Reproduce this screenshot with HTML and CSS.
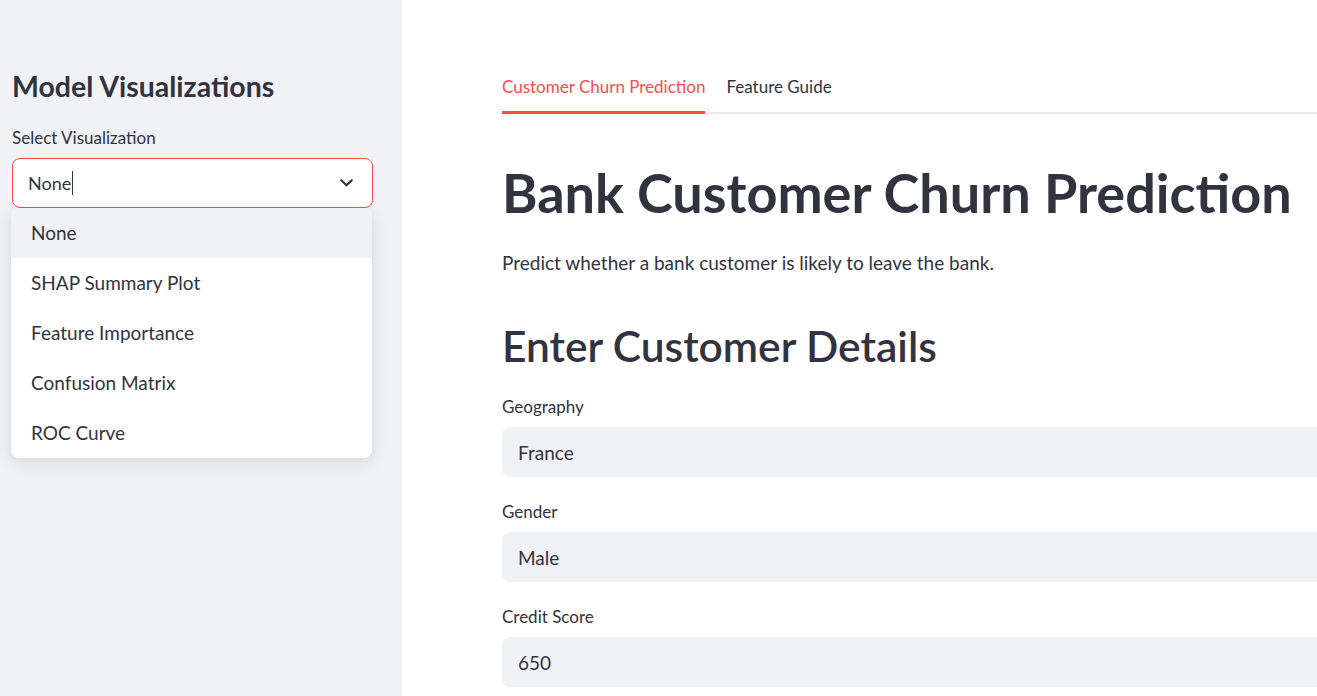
FILE: index.html
```html
<!DOCTYPE html>
<html lang="en">
<head>
<meta charset="utf-8">
<title>Bank Customer Churn Prediction</title>
<link rel="stylesheet" href="styles.css">
</head>
<body>
<div class="app">
  <aside class="sidebar">
    <h2 class="side-title">Model Visualizations</h2>
    <label class="label side-label">Select Visualization</label>
    <div class="select-wrap">
      <div class="select open">
        <span class="select-value">None<span class="caret"></span></span>
        <svg class="chevron" width="13" height="8" viewBox="0 0 13 8"><path d="M1.3 1.3 L6.5 6.3 L11.7 1.3" fill="none" stroke="#31333f" stroke-width="2.2" stroke-linecap="round" stroke-linejoin="round"/></svg>
      </div>
      <ul class="menu">
        <li class="menu-item active">None</li>
        <li class="menu-item">SHAP Summary Plot</li>
        <li class="menu-item">Feature Importance</li>
        <li class="menu-item">Confusion Matrix</li>
        <li class="menu-item">ROC Curve</li>
      </ul>
    </div>
  </aside>
  <main class="main">
    <div class="tabs">
      <div class="tab active">Customer Churn Prediction</div>
      <div class="tab">Feature Guide</div>
    </div>
    <h1 class="title">Bank Customer Churn Prediction</h1>
    <p class="lead">Predict whether a bank customer is likely to leave the bank.</p>
    <h2 class="section">Enter Customer Details</h2>
    <div class="field">
      <div class="label">Geography</div>
      <div class="input">France</div>
    </div>
    <div class="field">
      <div class="label">Gender</div>
      <div class="input">Male</div>
    </div>
    <div class="field">
      <div class="label">Credit Score</div>
      <div class="input">650</div>
    </div>
  </main>
</div>
</body>
</html>
```
FILE: styles.css
```css
* { box-sizing: border-box; }
html, body {
  margin: 0;
  padding: 0;
  height: 100%;
  overflow: hidden;
}
body {
  font-family: Lato, "Noto Sans", sans-serif;
  color: #31333f;
  background: #ffffff;
}
.app {
  display: flex;
  height: 696px;
}
.sidebar {
  width: 402px;
  flex: none;
  background: #f0f2f6;
  padding: 66px 29px 0 12px;
}
.side-title {
  margin: 0;
  font-size: 28.5px;
  font-weight: 700;
  line-height: 40px;
}
.label {
  display: block;
  font-size: 17px;
  line-height: 24px;
  margin: 0;
}
.side-label {
  margin-top: 20px;
}
.select-wrap {
  position: relative;
  margin-top: 8px;
}
.select {
  height: 50px;
  width: 361px;
  background: #ffffff;
  border: 1px solid #ff4b4b;
  border-radius: 8px;
  display: flex;
  align-items: center;
  justify-content: space-between;
  padding: 0 19px 0 15px;
  font-size: 18px;
}
.select-value {
  display: flex;
  align-items: center;
}
.caret {
  display: inline-block;
  width: 1px;
  height: 24px;
  background: #31333f;
  margin-left: 1px;
}
.menu {
  position: absolute;
  top: 50px;
  left: -1px;
  width: 361px;
  margin: 0;
  padding: 0;
  list-style: none;
  background: #ffffff;
  border-radius: 8px;
  box-shadow: 0 4px 16px rgba(0, 0, 0, 0.12);
  overflow: hidden;
}
.menu-item {
  height: 50px;
  display: flex;
  align-items: center;
  padding-left: 20px;
  padding-bottom: 1px;
  font-size: 19px;
}
.menu-item.active {
  background: #f0f2f6;
}
.main {
  flex: 1;
  padding: 74px 0 0 100px;
  min-width: 0;
}
.main > * {
  width: 1000px;
}
.tabs {
  display: flex;
  gap: 21px;
  border-bottom: 2px solid #ebebee;
  height: 40px;
}
.tab {
  font-size: 17px;
  line-height: 26px;
  padding-bottom: 11px;
  margin-bottom: -2px;
  border-bottom: 3px solid transparent;
}
.tab.active {
  color: #ff4b4b;
  border-bottom-color: #ff4b4b;
}
.title {
  margin: 47px 0 0 0;
  font-size: 54px;
  font-weight: 700;
  line-height: 64px;
}
.lead {
  margin: 24px 0 0 0;
  font-size: 19px;
  line-height: 28px;
}
.section {
  margin: 42px 0 0 0;
  font-size: 42.5px;
  font-weight: 600;
  line-height: 54px;
}
.field {
  margin-top: 22px;
}
.field + .field {
  margin-top: 23px;
}
.input {
  margin-top: 8px;
  height: 50px;
  width: 100%;
  background: #f0f2f6;
  border-radius: 8px;
  display: flex;
  align-items: center;
  padding-left: 16px;
  font-size: 19px;
}
```
